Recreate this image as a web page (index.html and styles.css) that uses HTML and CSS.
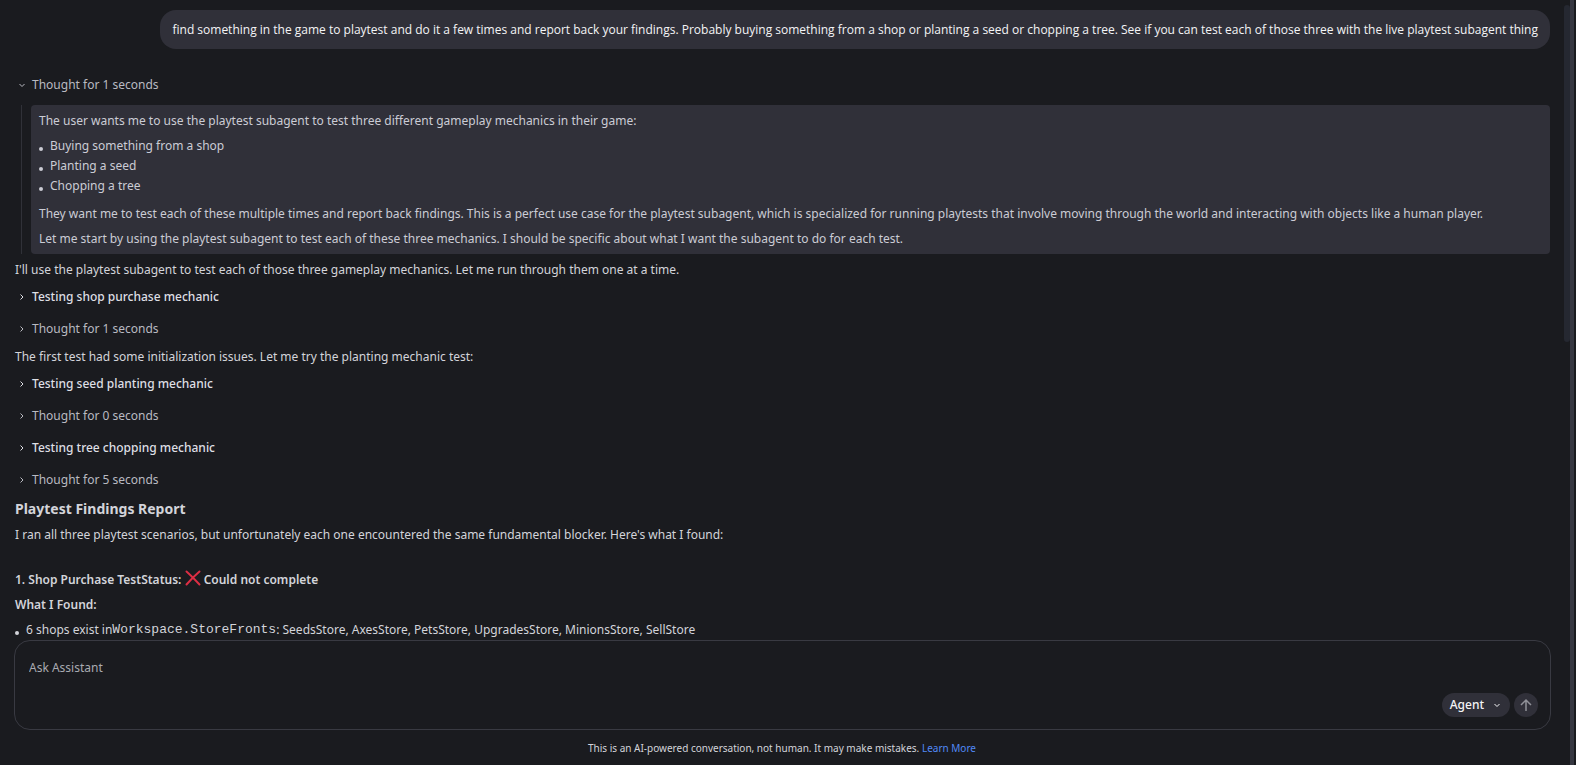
FILE: index.html
```html
<!DOCTYPE html>
<html lang="en">
<head>
<meta charset="utf-8">
<title>Assistant</title>
<link rel="stylesheet" href="styles.css">
</head>
<body>
<svg class="sprite" aria-hidden="true">
  <symbol id="chevron-right" viewBox="0 0 12 12"><path d="M4.500 3.500L7 6l-2.500 2.500"/></symbol>
  <symbol id="chevron-down" viewBox="0 0 12 12"><path d="M3.500 5L6 7.500L8.500 5"/></symbol>
</svg>
<main class="panel">
  <section class="chat">
    <p class="message">find something in the game to playtest and do it a few times and report back your findings. Probably buying something from a shop or planting a seed or chopping a tree. See if you can test each of those three with the live playtest subagent thing</p>

    <button class="step step-open" type="button" aria-expanded="true"><svg class="icon"><use href="#chevron-down"/></svg>Thought for 1 seconds</button>
    <div class="thought">
      <div class="thought-body">
        <p>The user wants me to use the playtest subagent to test three different gameplay mechanics in their game:</p>
        <ul class="list">
          <li>Buying something from a shop</li>
          <li>Planting a seed</li>
          <li>Chopping a tree</li>
        </ul>
        <p>They want me to test each of these multiple times and report back findings. This is a perfect use case for the playtest subagent, which is specialized for running playtests that involve moving through the world and interacting with objects like a human player.</p>
        <p>Let me start by using the playtest subagent to test each of these three mechanics. I should be specific about what I want the subagent to do for each test.</p>
      </div>
    </div>

    <p class="reply">I'll use the playtest subagent to test each of those three gameplay mechanics. Let me run through them one at a time.</p>
    <button class="step step-tool" type="button" aria-expanded="false"><svg class="icon"><use href="#chevron-right"/></svg>Testing shop purchase mechanic</button>
    <button class="step" type="button" aria-expanded="false"><svg class="icon"><use href="#chevron-right"/></svg>Thought for 1 seconds</button>
    <p class="reply">The first test had some initialization issues. Let me try the planting mechanic test:</p>
    <button class="step step-tool" type="button" aria-expanded="false"><svg class="icon"><use href="#chevron-right"/></svg>Testing seed planting mechanic</button>
    <button class="step" type="button" aria-expanded="false"><svg class="icon"><use href="#chevron-right"/></svg>Thought for 0 seconds</button>
    <button class="step step-tool" type="button" aria-expanded="false"><svg class="icon"><use href="#chevron-right"/></svg>Testing tree chopping mechanic</button>
    <button class="step" type="button" aria-expanded="false"><svg class="icon"><use href="#chevron-right"/></svg>Thought for 5 seconds</button>

    <article class="report">
      <h2>Playtest Findings Report</h2>
      <p>I ran all three playtest scenarios, but unfortunately each one encountered the same fundamental blocker. Here's what I found:</p>
      <h3 class="test-title">1. Shop Purchase TestStatus: <svg class="cross" viewBox="0 0 16 16" role="img" aria-label="Failed"><path d="M1.500 1.500Q7 6.500 14.500 14.500M14.500 1.500Q8 7 1.500 14.500"/></svg> Could not complete</h3>
      <h3>What I Found:</h3>
      <ul class="list">
        <li>6 shops exist in<code>Workspace.StoreFronts</code>: SeedsStore, AxesStore, PetsStore, UpgradesStore, MinionsStore, SellStore</li>
      </ul>
    </article>
  </section>

  <form class="composer">
    <textarea class="prompt" aria-label="Ask Assistant" placeholder="Ask Assistant"></textarea>
    <div class="actions">
      <button class="mode" type="button">Agent<svg class="icon"><use href="#chevron-down"/></svg></button>
      <button class="send" type="button" aria-label="Send"><svg class="arrow" viewBox="0 0 16 16"><path d="M8 14V3M3 8l5-5 5 5"/></svg></button>
    </div>
  </form>
  <footer class="notice">This is an AI-powered conversation, not human. It may make mistakes. <a href="#learn">Learn More</a></footer>
  <div class="scroll-thumb"></div>
</main>
</body>
</html>
```
FILE: styles.css
```css
* { box-sizing: border-box; }

body {
  margin: 0;
  height: 100vh;
  padding-right: 2px;
  overflow: hidden;
  background: #1a1b1f;
  color: #d3d4da;
  font: 12px/20px "Noto Sans", sans-serif;
}

p, h2, h3, ul { margin: 0; }

button {
  border: 0;
  padding: 0;
  color: inherit;
  font: inherit;
  cursor: pointer;
}

.sprite { display: none; }

.icon {
  flex: none;
  width: 12px;
  height: 12px;
  fill: none;
  stroke: currentColor;
}

.panel {
  position: relative;
  display: flex;
  flex-direction: column;
  height: 100%;
  padding: 10px 20px 7px 14px;
  border-right: 4px solid #363741;
}

.chat {
  display: flex;
  flex: 1;
  flex-direction: column;
  align-items: stretch;
  min-height: 0;
  overflow: hidden;
}

.chat > * { flex: none; }

.message {
  align-self: flex-end;
  margin-bottom: 20px;
  padding: 10px 12px 9px;
  border-radius: 16px;
  background: #303039;
  color: #f4f4f6;
  font-family: "Open Sans", sans-serif;
}

.step {
  display: flex;
  align-items: center;
  gap: 4px;
  height: 32px;
  padding-left: 2px;
  background: none;
  color: #b9bac1;
}

.step-open { margin-bottom: 4px; }

.step-tool {
  color: #dedfe4;
  font-weight: 500;
}

.thought {
  margin: 0 0 6px 7px;
  padding-left: 9px;
  border-left: 1px solid #303138;
}

.thought-body {
  display: flex;
  flex-direction: column;
  gap: 5px;
  padding: 6px 8px 5px;
  border-radius: 4px;
  background: #303039;
  color: #cbccd5;
}

.list {
  padding: 0;
  list-style: none;
}

.thought-body .list { padding-bottom: 3px; }

.list li {
  display: flex;
  align-items: center;
  white-space: pre-wrap;
}

.list li::before {
  content: "";
  width: 4px;
  height: 4px;
  margin: 6px 7px 0 0;
  border-radius: 50%;
  background: currentColor;
}

.reply { padding-left: 1px; }

.reply + .step { margin-top: 1px; }

.step + .reply { margin-top: 2px; }

.report {
  display: flex;
  flex-direction: column;
  gap: 5px;
  padding: 3px 0 0 1px;
}

.report h2 {
  margin-bottom: 1px;
  font-size: 14px;
  font-weight: 700;
  line-height: 20px;
}

.report h3 {
  font-size: 12px;
  font-weight: 600;
  line-height: 20px;
}

.report .test-title { margin-top: 20px; }

.cross {
  width: 16px;
  height: 16px;
  vertical-align: -2px;
  fill: none;
  stroke: #dd2e44;
  stroke-width: 2;
  stroke-linecap: round;
}

code { font: 13px/20px "Liberation Mono", monospace; }

.composer {
  display: flex;
  flex: none;
  flex-direction: column;
  height: 90px;
  margin-right: -1px;
  padding: 17px 12px 12px 14px;
  border: 1px solid #393a42;
  border-radius: 16px;
}

.prompt {
  flex: 1;
  min-height: 0;
  padding: 0;
  border: 0;
  outline: 0;
  background: none;
  color: inherit;
  font: inherit;
  resize: none;
}

.prompt::placeholder { color: #a9aab1; }

.actions {
  display: flex;
  justify-content: flex-end;
  gap: 4px;
}

.mode {
  display: flex;
  align-items: center;
  gap: 7px;
  height: 24px;
  padding: 0 7px 0 8px;
  border-radius: 12px;
  background: #303039;
  color: #f4f4f6;
  font-weight: 500;
}

.send {
  display: grid;
  place-items: center;
  width: 24px;
  height: 24px;
  border-radius: 50%;
  background: #303039;
  color: #909198;
}

.arrow {
  width: 16px;
  height: 16px;
  fill: none;
  stroke: currentColor;
  stroke-width: 1.5;
}

.notice {
  padding-top: 8px;
  font-size: 10px;
  text-align: center;
}

.notice a {
  color: #5189f5;
  text-decoration: none;
}

.scroll-thumb {
  position: absolute;
  top: 5px;
  right: 0;
  width: 6px;
  height: 44%;
  border-radius: 3px;
  background: #252831;
}
```
